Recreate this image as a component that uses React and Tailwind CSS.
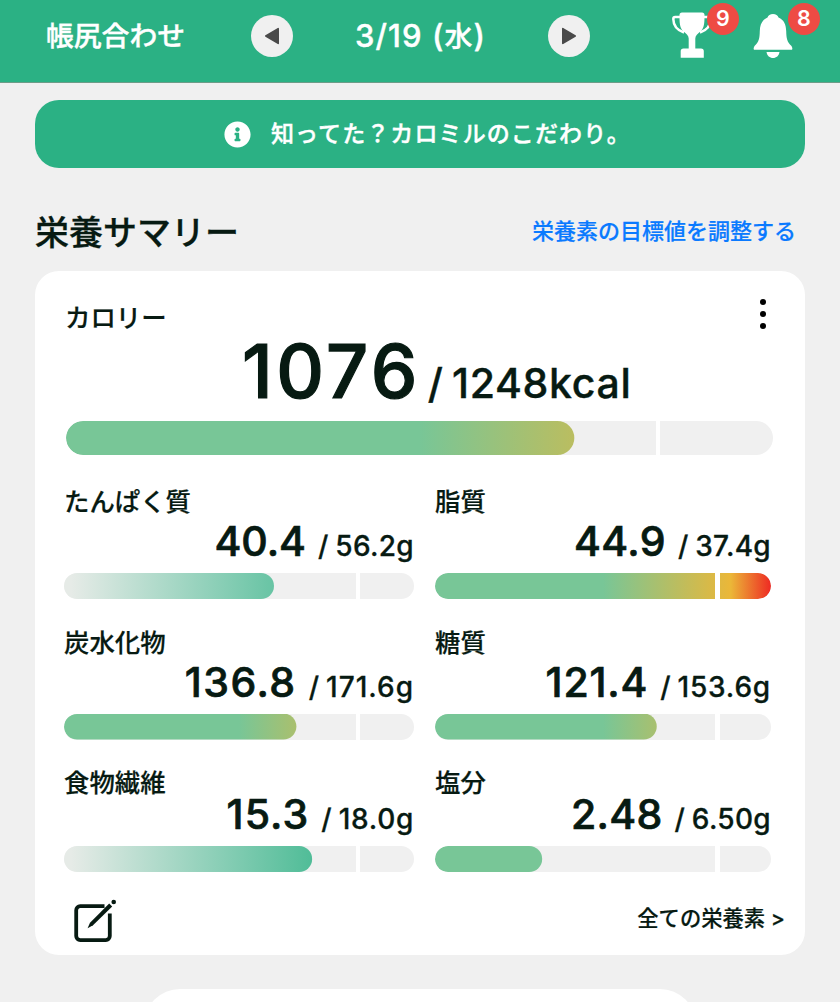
import { FaInfoCircle } from "react-icons/fa";

const LIMIT_GRADIENT = "bg-[linear-gradient(90deg,#78c697_50%,#ebb738_88%,#ee2a23_100%)]";
const REACH_GRADIENT = "bg-[linear-gradient(90deg,#e6ebe7_2%,#2bb184_88%)]";

const nutrients = [
  { label: "たんぱく質", value: "40.4", target: "56.2g", fill: 60, reach: true, valueGap: "tracking-[0px]", targetGap: "tracking-[0.3px]" },
  { label: "脂質", value: "44.9", target: "37.4g", fill: 100, valueGap: "tracking-[0.4px]", targetGap: "tracking-[0.3px]" },
  { label: "炭水化物", value: "136.8", target: "171.6g", fill: 66.4, valueGap: "tracking-[1.5px]", targetGap: "tracking-[1px]" },
  { label: "糖質", value: "121.4", target: "153.6g", fill: 66, valueGap: "tracking-[0.8px]", targetGap: "tracking-[0.8px]" },
  { label: "食物繊維", value: "15.3", target: "18.0g", fill: 70.9, reach: true, valueGap: "tracking-[1.1px]", targetGap: "tracking-[0.7px]" },
  { label: "塩分", value: "2.48", target: "6.50g", fill: 31.9, valueGap: "tracking-[0.3px]", targetGap: "tracking-[0.3px]" },
];

function Bar({ fill, reach, className }) {
  return (
    <div className={`grid overflow-hidden rounded-full bg-[#f0f0f0] ${className}`}>
      <div
        className={`[grid-area:1/1] ${reach ? REACH_GRADIENT : LIMIT_GRADIENT}`}
        style={{ clipPath: `inset(0 ${100 - fill}% 0 0 round 17px)` }}
      />
      <div className="z-10 ml-[83.4%] w-[4.5px] bg-white [grid-area:1/1]" />
    </div>
  );
}

function Nutrient({ label, value, target, fill, reach, valueGap, targetGap }) {
  return (
    <div className="flex flex-col">
      <div className="h-[30px] text-[25.4px] leading-[30px] whitespace-nowrap [-webkit-text-stroke:0.2px]">
        {label}
      </div>
      <div className="flex flex-1 items-end justify-end pb-[11px]">
        <div className="flex items-baseline leading-[32px] whitespace-nowrap [-webkit-text-stroke:0.3px]">
          <span className={`text-[41px] [-webkit-text-stroke:0.7px] ${valueGap}`}>{value}</span>
          <span className="ml-[12px] text-[28px]">/</span>
          <span className={`ml-[7px] text-[28px] ${targetGap}`}>{target}</span>
        </div>
      </div>
      <Bar fill={fill} reach={reach} className="h-[26px] shrink-0" />
    </div>
  );
}

function ArrowButton({ back }) {
  return (
    <button className="flex size-[42px] items-center justify-center rounded-full bg-[#f0f0f0]">
      <svg viewBox="0 0 16 18" className={`h-[18px] w-[16px] ${back ? "rotate-180" : ""}`}>
        <path
          d="M1.8 1.6 14.2 9 1.8 16.4Z"
          fill="#4a4a4a"
          stroke="#4a4a4a"
          strokeWidth="1.6"
          strokeLinejoin="round"
        />
      </svg>
    </button>
  );
}

function TrophyIcon() {
  return (
    <svg viewBox="0 0 40 46" className="mt-[12px] h-[46px] w-[40px]" fill="currentColor">
      <path d="M10 0.5H30Q32.5 0.5 32.5 3C32.5 10 32.5 15.5 29 19C25.500 22 23.300 23.500 23.300 26.500V36.500H29Q31.800 36.500 31.800 39.300V45.700H8.700V39.300Q8.700 36.500 11.500 36.500H16.700V26.500C16.700 23.500 14.500 22 11 19C7.500 15.500 7.500 10 7.500 3Q7.500 0.500 10 0.500Z" />
      <path
        d="M8 5H3.200Q1.300 5 1.300 7C1.400 13.500 4.500 18 12 20.500M32 5H36.800Q38.700 5 38.700 7C38.600 13.500 35.500 18 28 20.500"
        fill="none"
        stroke="currentColor"
        strokeWidth="2.500"
      />
    </svg>
  );
}

function BellIcon() {
  return (
    <svg viewBox="0 0 40 46" className="mt-[13px] h-[46px] w-[40px]" fill="currentColor">
      <path d="M20 1C22.800 1 24.800 2.400 25.500 4.500C31 6.800 33 11.500 33.200 18C33.400 25.500 34 29 38.500 33Q40.500 36.800 38 36.800H2Q-0.500 36.800 1.500 33C6 29 6.600 25.500 6.800 18C7 11.500 9 6.800 14.500 4.500C15.200 2.400 17.200 1 20 1Z" />
      <path d="M13.500 39H26.500C26 42.800 23.300 45 20 45C16.700 45 14 42.800 13.500 39Z" />
    </svg>
  );
}

function Badge({ children }) {
  return (
    <span className="absolute top-[3px] left-[35px] flex size-[32px] items-center justify-center rounded-full bg-[#ee4b44] text-[21.5px] leading-none font-semibold">
      {children}
    </span>
  );
}

export default function App() {
  return (
    <div className="flex h-[1002px] w-[840px] flex-col overflow-hidden bg-[#f0f0f0] font-['Inter','Noto_Sans_CJK_JP',sans-serif] font-medium text-[#071a12]">
      <header className="flex h-[83px] shrink-0 border-b border-[#6d9c88] bg-[#2bb184] text-white">
        <div className="ml-[46px] h-[72px] w-[205px] text-[27.8px] leading-[72px] whitespace-nowrap [-webkit-text-stroke:0.4px]">
          帳尻合わせ
        </div>
        <div className="flex h-[72px] items-center">
          <ArrowButton back />
          <div className="w-[255px] text-center text-[31px] tracking-[1.1px] whitespace-nowrap [-webkit-text-stroke:0.4px]">
            3/19 (<span className="text-[28px]">水</span>)
          </div>
          <ArrowButton />
        </div>
        <div className="relative ml-[82px] h-[72px] w-[40px]">
          <TrophyIcon />
          <Badge>9</Badge>
        </div>
        <div className="relative ml-[41px] h-[72px] w-[40px]">
          <BellIcon />
          <Badge>8</Badge>
        </div>
      </header>

      <div className="mx-[35px] mt-[17px] flex h-[68px] shrink-0 items-center rounded-[24px] bg-[#2bb184] pl-[189px] text-white">
        <FaInfoCircle className="size-[27px]" />
        <span className="mt-px ml-[20px] text-[23px] tracking-[1.1px] whitespace-nowrap [-webkit-text-stroke:0.4px]">
          知ってた？カロミルのこだわり。
        </span>
      </div>

      <div className="mt-[40px] flex h-[50px] shrink-0 items-center justify-between pr-[44px] pl-[35px]">
        <h1 className="text-[34px] leading-[50px] whitespace-nowrap [-webkit-text-stroke:0.3px]">
          栄養サマリー
        </h1>
        <a className="mb-[3px] text-[22px] leading-[47px] whitespace-nowrap text-[#0a7aff] [-webkit-text-stroke:0.2px]">
          栄養素の目標値を調整する
        </a>
      </div>

      <main className="mx-[35px] mt-[13px] flex h-[684px] shrink-0 flex-col rounded-[24px] bg-white">
        <div className="flex h-[62px] justify-between pt-[28px] pr-[39px] pl-[30px]">
          <span className="text-[25.4px] leading-[38px] whitespace-nowrap [-webkit-text-stroke:0.2px]">
            カロリー
          </span>
          <div className="flex flex-col gap-[6px]">
            <i className="size-[6px] rounded-full bg-black" />
            <i className="size-[6px] rounded-full bg-black" />
            <i className="size-[6px] rounded-full bg-black" />
          </div>
        </div>
        <div className="flex h-[88px] items-baseline pl-[207px] leading-[76px] whitespace-nowrap [-webkit-text-stroke:0.4px]">
          <span className="text-[74px] tracking-[3.5px] [-webkit-text-stroke:1.2px]">1076</span>
          <span className="ml-[7px] text-[41px]">/</span>
          <span className="ml-[9px] text-[41px] tracking-[0.7px]">1248kcal</span>
        </div>
        <Bar fill={71.9} className="mr-[32px] ml-[31px] h-[34px] shrink-0" />

        <div className="mt-[32px] ml-[29px] grid grid-cols-[350px_336px] grid-rows-[112px_112px_104px] gap-x-[21px] gap-y-[28.5px]">
          {nutrients.map((n) => (
            <Nutrient key={n.label} {...n} />
          ))}
        </div>

        <div className="flex justify-between pt-[26px] pr-[20px] pl-[36px]">
          <svg viewBox="0 0 46 46" className="size-[46px]" fill="#071a12">
            <path
              d="M33.500 8.200H9.200a4 4 0 0 0-4 4V38.100a4 4 0 0 0 4 4H34.800a4 4 0 0 0 4-4V15.500"
              fill="none"
              stroke="#071a12"
              strokeWidth="3.800"
            />
            <path d="M38.200 5.600 41.200 8.600 22 27.300 16.600 30.200 19 24.800Z" />
            <circle cx="42.700" cy="4" r="2.300" />
          </svg>
          <span className="text-[21.3px] leading-[40px] whitespace-nowrap [-webkit-text-stroke:0.2px]">
            全ての栄養素 &gt;
          </span>
        </div>
      </main>

      <div className="mt-[34px] ml-[144px] h-[72px] w-[552px] shrink-0 rounded-full bg-white" />
    </div>
  );
}
